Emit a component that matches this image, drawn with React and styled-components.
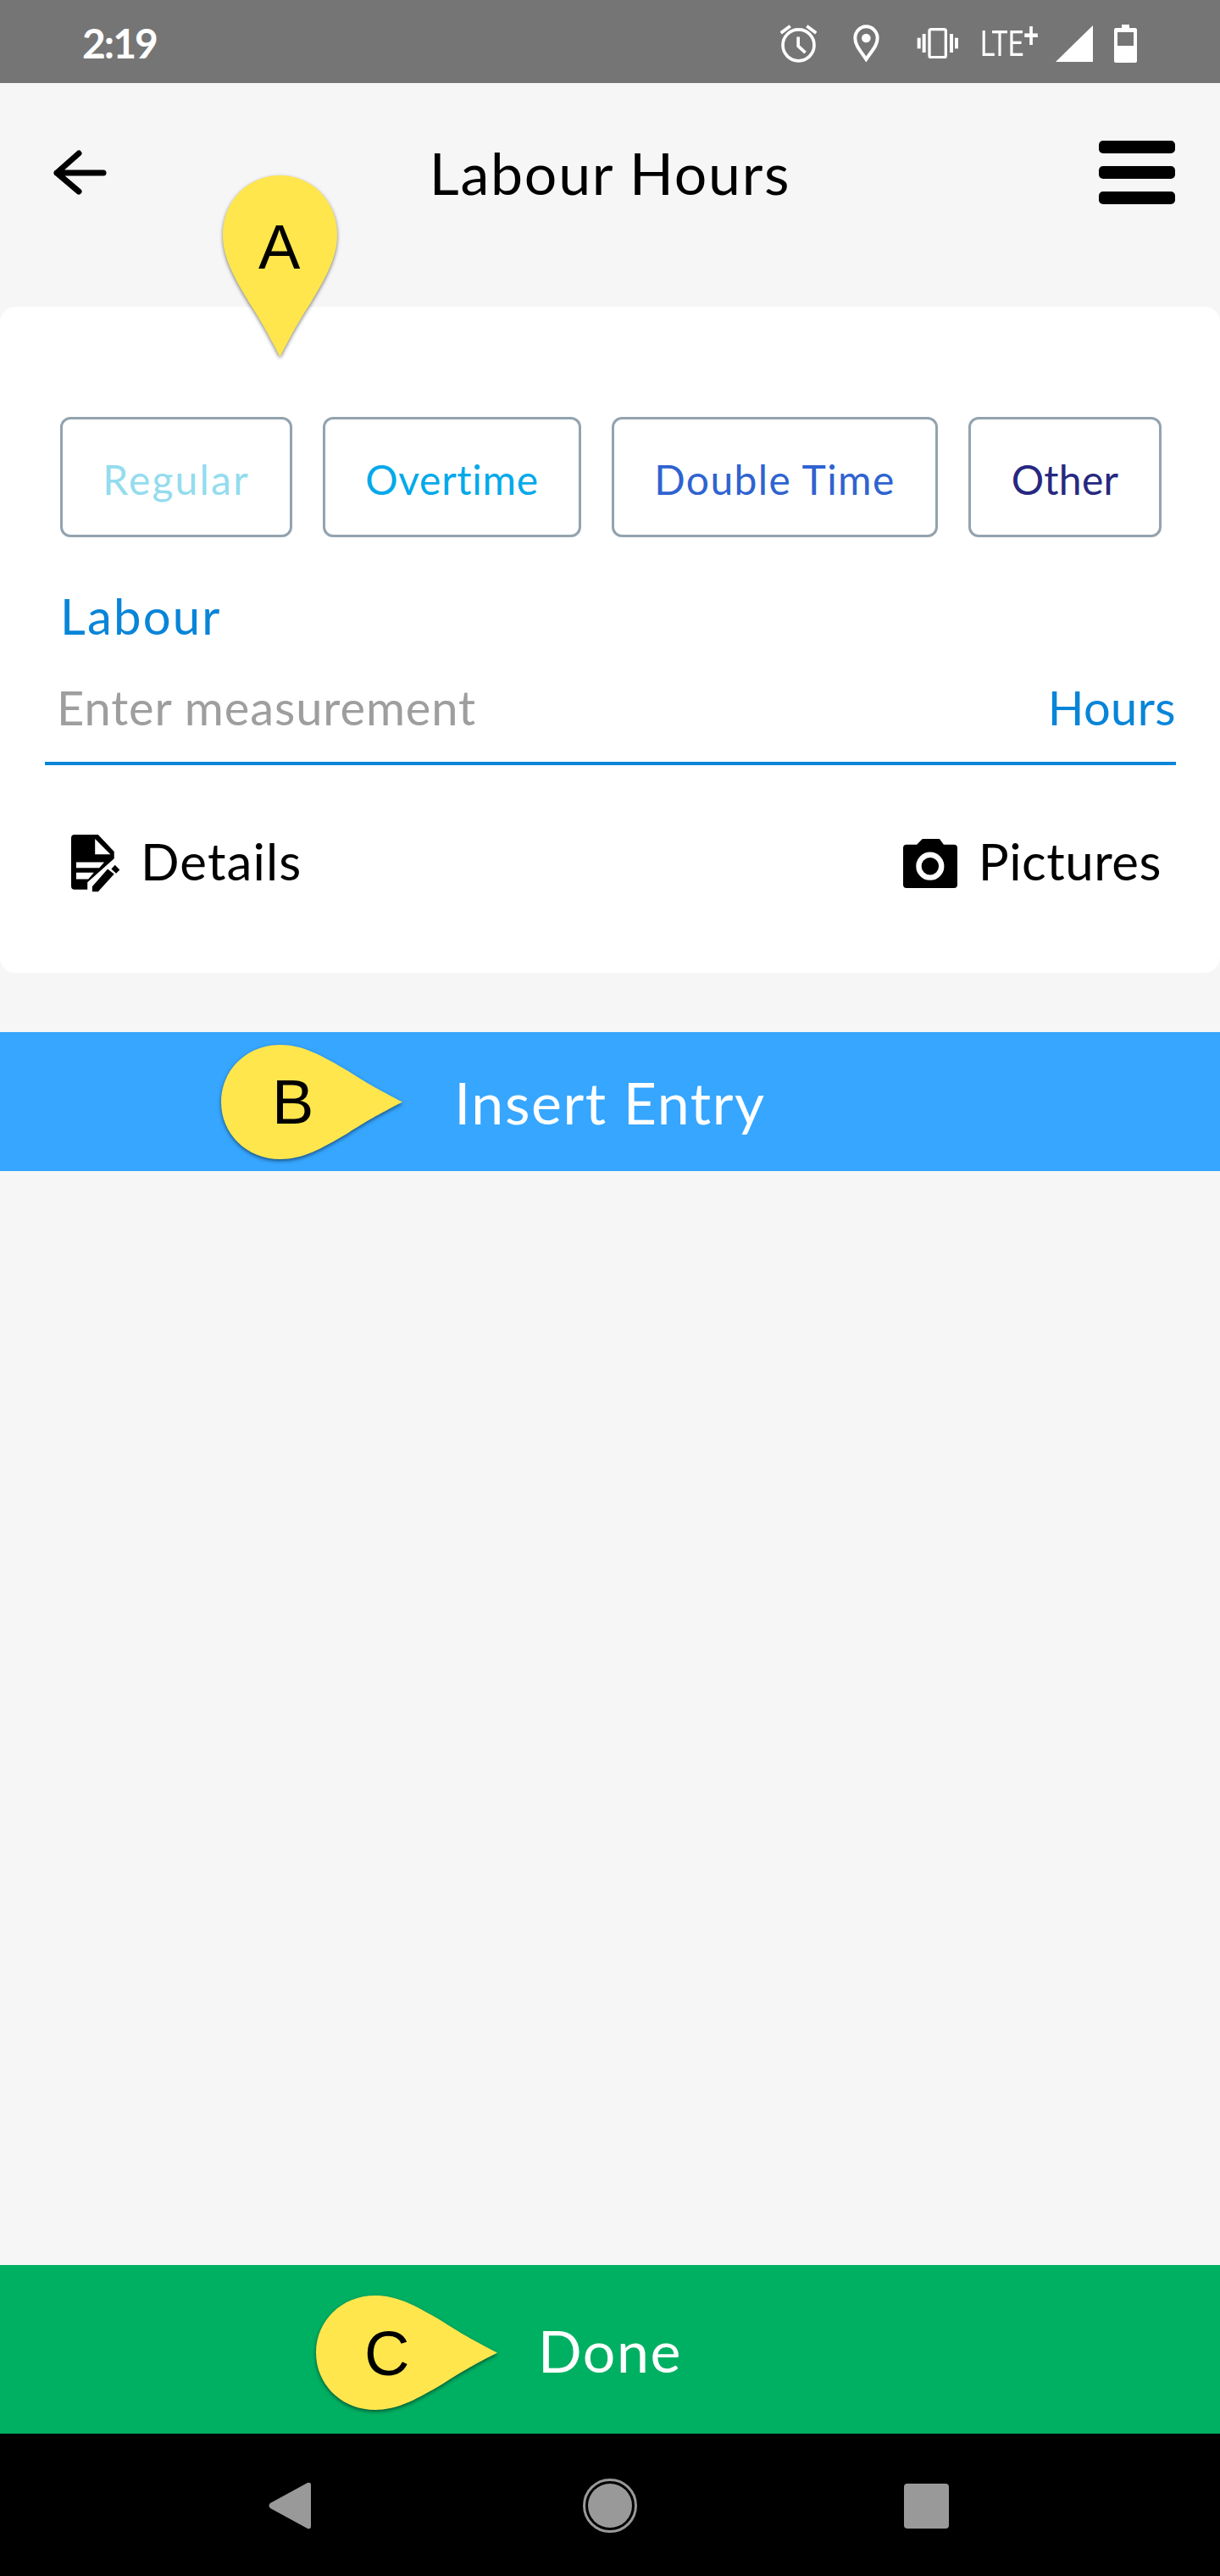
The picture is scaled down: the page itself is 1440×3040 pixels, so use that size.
import React from 'react';
import styled, { createGlobalStyle } from 'styled-components';

const GlobalStyle = createGlobalStyle`
  html, body { margin: 0; padding: 0; background: #f6f6f6; }
  * { box-sizing: border-box; }
`;

const FONT = `Lato, "Noto Sans", sans-serif`;

const Page = styled.div`
  width: 1440px;
  height: 3040px;
  display: flex;
  flex-direction: column;
  background: #f6f6f6;
  font-family: ${FONT};
  overflow: hidden;
`;

const StatusBar = styled.div`
  height: 98px;
  flex: none;
  background: #757575;
  color: #fff;
  display: flex;
  align-items: center;
  padding: 4px 98px 0 97px;
`;

const Clock = styled.span`
  font-size: 48px;
  line-height: 1;
  font-weight: 700;
  letter-spacing: -2px;
  margin-right: auto;
`;

const Glyph = styled.svg`
  flex: none;
  display: block;
  margin-left: ${(p) => p.$gap || 0}px;
`;

const Network = styled.span`
  display: block;
  width: 79px;
  margin-left: 26px;
  font-family: Roboto, sans-serif;
  font-weight: 400;
  font-size: 43px;
  line-height: 44px;
  white-space: nowrap;
  transform: scaleX(0.76);
  transform-origin: left center;
  sup {
    font-size: 42px;
    line-height: 0;
    vertical-align: 10px;
    font-weight: 500;
  }
`;

const Header = styled.header`
  position: relative;
  height: 264px;
  flex: none;
  display: grid;
  grid-template-columns: 1fr auto 1fr;
  align-items: center;
  align-content: start;
  padding: 68px 53px 0;
`;

const BackSlot = styled.div`
  padding-left: 10px;
`;

const Title = styled.h1`
  margin: 0;
  font-size: 68px;
  line-height: 75px;
  font-weight: 400;
  letter-spacing: 1.75px;
  color: #000;
`;

const Burger = styled.div`
  justify-self: end;
  display: flex;
  flex-direction: column;
  gap: 15px;
  width: 90px;
  span {
    display: block;
    height: 15px;
    background: #000;
    border-radius: 5px;
  }
`;

const Pin = styled.div`
  position: absolute;
  left: ${(p) => p.$left}px;
  top: ${(p) => p.$top}px;
  z-index: 3;
  svg {
    display: block;
    filter: drop-shadow(0 2px 2px rgba(0, 0, 0, 0.5));
  }
`;

const PinLetter = styled.span`
  position: absolute;
  left: ${(p) => p.$left}px;
  top: ${(p) => p.$top}px;
  font-family: "Liberation Sans", Arial, sans-serif;
  font-size: 74px;
  line-height: 1;
  letter-spacing: 0;
  color: #000;
`;

const Card = styled.section`
  height: 786px;
  flex: none;
  background: #fff;
  border-radius: 18px;
  padding-top: 130px;
`;

const TypeRow = styled.div`
  display: flex;
  padding-left: 71px;
  gap: 36px;
`;

const TypeButton = styled.button`
  width: ${(p) => p.$width}px;
  height: 142px;
  padding: 5px 0 0;
  background: #fff;
  border: 3px solid #93a3af;
  border-radius: 12px;
  color: ${(p) => p.$color};
  font-family: ${FONT};
  font-size: 48px;
  line-height: 1;
  letter-spacing: ${(p) => p.$track}px;
`;

const Label = styled.div`
  margin: 64px 0 0 71px;
  font-size: 58px;
  line-height: 1;
  letter-spacing: 2.2px;
  color: #0885d8;
`;

const Field = styled.div`
  margin: 51px 52px 0 53px;
  padding: 0 0 36px 14px;
  border-bottom: 4px solid #0885d8;
  display: flex;
  justify-content: space-between;
  font-size: 56px;
  line-height: 1;
`;

const Placeholder = styled.span`
  color: #9e9e9e;
  letter-spacing: 0.9px;
`;

const Unit = styled.span`
  color: #0885d8;
  letter-spacing: 0.4px;
`;

const ActionRow = styled.div`
  margin-top: 82px;
  padding: 0 69px 0 84px;
  display: flex;
  justify-content: space-between;
`;

const Action = styled.div`
  display: flex;
  align-items: center;
  gap: ${(p) => p.$gap}px;
  font-size: 60px;
  line-height: 1;
  letter-spacing: ${(p) => p.$track}px;
  color: #000;
  span {
    position: relative;
    top: -3px;
  }
`;

const Bar = styled.div`
  position: relative;
  flex: none;
  height: ${(p) => p.$height}px;
  background: ${(p) => p.$color};
  color: #fff;
  display: flex;
  align-items: center;
  justify-content: center;
  padding-top: 2px;
  font-size: 68px;
  line-height: 1;
  letter-spacing: 1.6px;
`;

const InsertBar = styled(Bar)`
  margin-top: 70px;
`;

const Spacer = styled.div`
  flex: 1;
`;

const NavBar = styled.nav`
  height: 168px;
  flex: none;
  background: #000;
  display: flex;
  align-items: center;
  padding: 2px 320px 0 317px;
  justify-content: space-between;
`;

const DOWN_PIN = 'M67.5 214 C52 184 44 170 31 150 C12 118 0 96 0 70 C0 30 30 0 67.5 0 C105 0 135 30 135 70 C135 96 123 118 104 150 C91 170 83 184 67.5 214 Z';
const RIGHT_PIN = 'M214 67.5 C184 52 170 44 150 31 C118 12 96 0 70 0 C30 0 0 30 0 67.5 C0 105 30 135 70 135 C96 135 118 123 150 104 C170 91 184 83 214 67.5 Z';

const Marker = ({ right, letter, left, top, letterLeft, letterTop }) => (
  <Pin $left={left} $top={top}>
    <svg width={right ? 214 : 135} height={right ? 135 : 214} viewBox={right ? '0 0 214 135' : '0 0 135 214'}>
      <path d={right ? RIGHT_PIN : DOWN_PIN} fill="#ffe64d" />
    </svg>
    <PinLetter $left={letterLeft} $top={letterTop}>{letter}</PinLetter>
  </Pin>
);

const AlarmIcon = () => (
  <Glyph width="43" height="45" viewBox="125 85 128 133" fill="none" stroke="#fff" strokeWidth="11">
    <circle cx="189" cy="157" r="55" />
    <path d="M188 128V160L213 183M127 114L160 90M218 90L251 114" />
  </Glyph>
);

const LocationIcon = () => (
  <Glyph $gap={43} width="31" height="44" viewBox="382 85 93 132">
    <path d="M428 208C410 180 389 160 389 133C389 110 406 92 428 92C450 92 468 110 468 133C468 160 446 180 428 208Z" fill="none" stroke="#fff" strokeWidth="12" />
    <circle cx="428" cy="133" r="16" fill="#fff" />
  </Glyph>
);

const VibrateIcon = () => (
  <Glyph $gap={44} width="49" height="36" viewBox="605 97 147 108" fill="#fff">
    <rect x="650" y="102" width="58" height="99" rx="6" fill="none" stroke="#fff" strokeWidth="10" />
    <rect x="607" y="132" width="12" height="38" />
    <rect x="625" y="118" width="12" height="66" />
    <rect x="722" y="118" width="12" height="66" />
    <rect x="740" y="132" width="12" height="38" />
  </Glyph>
);

const SignalIcon = () => (
  <Glyph $gap={10} width="44" height="43" viewBox="0 0 44 43">
    <path d="M44 0V43H0Z" fill="#fff" />
  </Glyph>
);

const BatteryIcon = () => (
  <Glyph $gap={25} width="27" height="45" viewBox="0 0 27 45">
    <path d="M9 0H18V4H25C26 4 27 5 27 6V43C27 44 26 45 25 45H2C1 45 0 44 0 43V6C0 5 1 4 2 4H9Z" fill="#fff" />
    <rect x="4" y="9" width="19" height="16" fill="#757575" />
  </Glyph>
);

const BackArrow = () => (
  <Glyph width="63" height="53" viewBox="0 0 63 53" fill="none" stroke="#000" strokeWidth="7" strokeLinecap="round" strokeLinejoin="round">
    <path d="M59 27H4M30 4L4 27L30 49" />
  </Glyph>
);

const DetailsIcon = () => (
  <Glyph width="58" height="68" viewBox="132 100 175 205">
    <path d="M144 100H228L285 160V185L190 270V295H144Q132 295 132 283V112Q132 100 144 100Z" fill="#000" />
    <path d="M217 115V170H272Z" fill="#fff" />
    <path d="M150 198H250L232 218H150ZM150 235H213L193 258H150Z" fill="#fff" />
    <path d="M207 285L262 222L285 240L228 303H207ZM275 222L288 208L305 225L292 238Z" fill="#000" />
  </Glyph>
);

const CameraIcon = () => (
  <Glyph width="64" height="58" viewBox="77 102 191 173">
    <path d="M125 122L145 102H205L220 122H256Q268 122 268 134V263Q268 275 256 275H89Q77 275 77 263V134Q77 122 89 122Z" fill="#000" />
    <circle cx="172" cy="198" r="40" fill="#000" stroke="#fff" strokeWidth="19" />
  </Glyph>
);

const NavBack = () => (
  <Glyph width="50" height="56" viewBox="0 0 50 56">
    <path d="M46 1Q50 0 50 4V52Q50 56 46 55L2 31Q-1 28 2 25Z" fill="#999" />
  </Glyph>
);

const NavHome = () => (
  <Glyph $gap={6} width="64" height="64" viewBox="0 0 64 64">
    <circle cx="32" cy="32" r="30.5" fill="none" stroke="#999" strokeWidth="3" />
    <circle cx="32" cy="32" r="26" fill="#999" />
  </Glyph>
);

const NavSquare = () => (
  <Glyph width="53" height="53" viewBox="0 0 53 53">
    <rect width="53" height="53" rx="4" fill="#999" />
  </Glyph>
);

const types = [
  { name: 'Regular', color: '#93dcee', width: 274, track: 2.2 },
  { name: 'Overtime', color: '#02a9ea', width: 305, track: 0.7 },
  { name: 'Double Time', color: '#2f63d0', width: 385, track: 1.4 },
  { name: 'Other', color: '#27287f', width: 228, track: 0.3 },
];

export default function App() {
  return (
    <Page>
      <GlobalStyle />
      <StatusBar>
        <Clock>2:19</Clock>
        <AlarmIcon />
        <LocationIcon />
        <VibrateIcon />
        <Network>LTE<sup>+</sup></Network>
        <SignalIcon />
        <BatteryIcon />
      </StatusBar>

      <Header>
        <BackSlot><BackArrow /></BackSlot>
        <Title>Labour Hours</Title>
        <Burger><span /><span /><span /></Burger>
        <Marker letter="A" left={263} top={109} letterLeft={42} letterTop={48} />
      </Header>

      <Card>
        <TypeRow>
          {types.map((t) => (
            <TypeButton key={t.name} $color={t.color} $width={t.width} $track={t.track}>{t.name}</TypeButton>
          ))}
        </TypeRow>
        <Label>Labour</Label>
        <Field>
          <Placeholder>Enter measurement</Placeholder>
          <Unit>Hours</Unit>
        </Field>
        <ActionRow>
          <Action $gap={24} $track={1.1}><DetailsIcon /><span>Details</span></Action>
          <Action $gap={25} $track={0.5}><CameraIcon /><span>Pictures</span></Action>
        </ActionRow>
      </Card>

      <InsertBar $height={164} $color="#36a6ff">
        <Marker right letter="B" left={261} top={15} letterLeft={60} letterTop={31} />
        Insert Entry
      </InsertBar>

      <Spacer />

      <Bar $height={199} $color="#00b062">
        <Marker right letter="C" left={373} top={36} letterLeft={57} letterTop={32} />
        Done
      </Bar>

      <NavBar>
        <NavBack />
        <NavHome />
        <NavSquare />
      </NavBar>
    </Page>
  );
}
